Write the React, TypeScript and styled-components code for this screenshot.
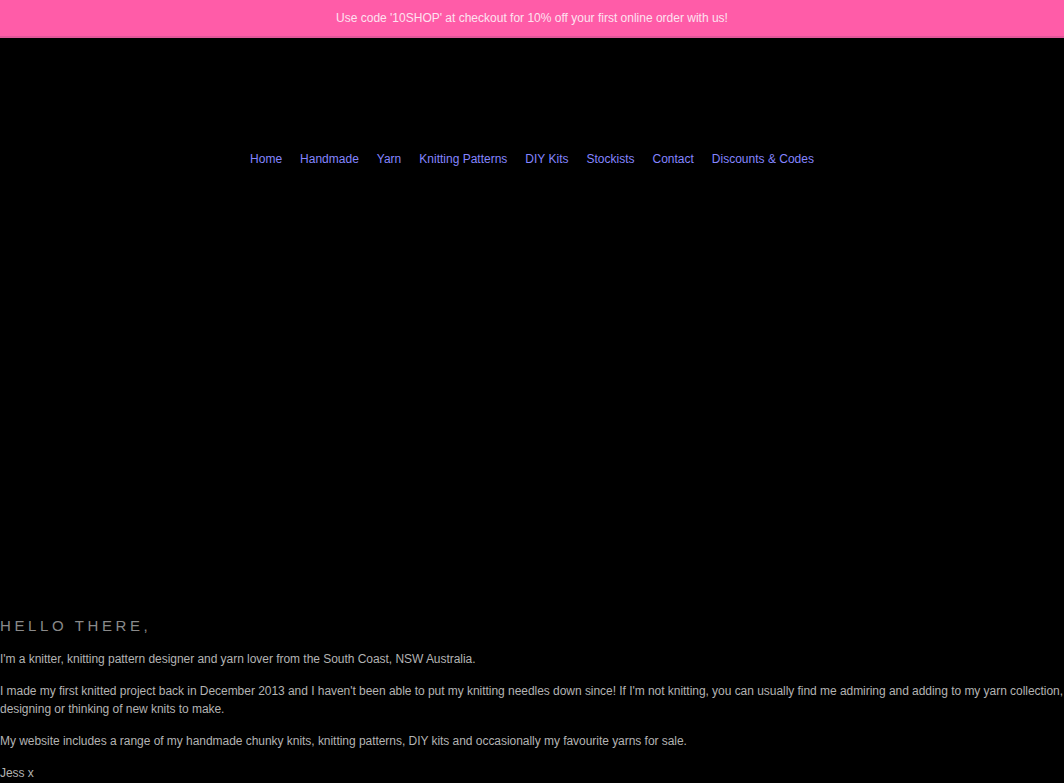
import React from "react";
import styled, { createGlobalStyle } from "styled-components";

const GlobalStyle = createGlobalStyle`
  html, body {
    margin: 0;
    padding: 0;
    background: #000;
  }
  body {
    font-family: "Liberation Sans", Arial, sans-serif;
  }
`;

const Page = styled.div`
  min-height: 783px;
  background: #000;
  display: flex;
  flex-direction: column;
`;

const Announcement = styled.div`
  height: 36px;
  background: #ff5ca8;
  border-bottom: 2px solid #e0589a;
  display: flex;
  align-items: center;
  justify-content: center;
  color: #fde3f0;
  font-size: 12px;
`;

const Header = styled.header`
  height: 244px;
  display: flex;
  justify-content: center;
  padding-top: 113px;
  box-sizing: border-box;
`;

const Nav = styled.nav`
  display: flex;
  gap: 18px;
  height: 16px;
  a {
    color: #8585ff;
    text-decoration: none;
    font-size: 12px;
    line-height: 16px;
  }
`;

const Hero = styled.div`
  height: 333px;
`;

const About = styled.section`
  color: #b3b3b3;
  font-size: 12px;
  line-height: 18px;
  letter-spacing: -0.04px;
`;

const Heading = styled.h2`
  margin: 0 0 13px;
  font-weight: 300;
  font-size: 15px;
  line-height: 22px;
  letter-spacing: 3.6px;
  color: #8a8a8a;
`;

const Para = styled.p`
  margin: 0 0 14px;
`;

const links = [
  "Home",
  "Handmade",
  "Yarn",
  "Knitting Patterns",
  "DIY Kits",
  "Stockists",
  "Contact",
  "Discounts & Codes",
];

export default function App() {
  return (
    <Page>
      <GlobalStyle />
      <Announcement>
        Use code '10SHOP' at checkout for 10% off your first online order with us!
      </Announcement>
      <Header>
        <Nav>
          {links.map((l) => (
            <a key={l} href="#">
              {l}
            </a>
          ))}
        </Nav>
      </Header>
      <Hero />
      <About>
        <Heading>HELLO THERE,</Heading>
        <Para>
          I'm a knitter, knitting pattern designer and yarn lover from the South Coast, NSW Australia.
        </Para>
        <Para>
          I made my first knitted project back in December 2013 and I haven't been able to put my
          knitting needles down since! If I'm not knitting, you can usually find me admiring and
          adding to my yarn collection, designing or thinking of new knits to make.
        </Para>
        <Para>
          My website includes a range of my handmade chunky knits, knitting patterns, DIY kits and
          occasionally my favourite yarns for sale.
        </Para>
        <Para>Jess x</Para>
      </About>
    </Page>
  );
}
